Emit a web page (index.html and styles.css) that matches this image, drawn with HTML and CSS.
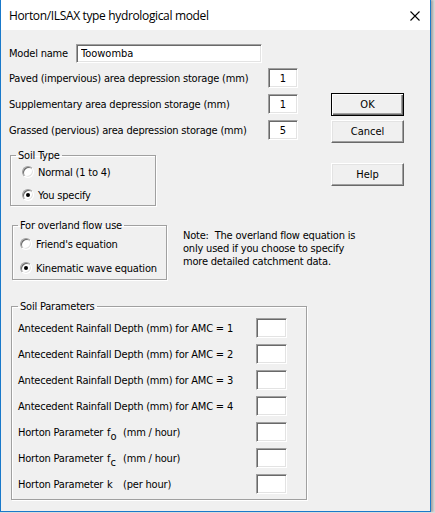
FILE: index.html
```html
<!DOCTYPE html>
<html lang="en">
<head>
    <meta charset="UTF-8">
    <title>Horton/ILSAX type hydrological model</title>
    <link rel="stylesheet" href="styles.css">
</head>
<body>
    <div class="window">
        <div class="titlebar">
            <span class="title">Horton/ILSAX type hydrological model</span>
            <svg class="close" width="10" height="10" viewBox="0 0 10 10">
                <path d="M0.5 0.5 L9.5 9.5 M9.5 0.5 L0.5 9.5" stroke="#000" stroke-width="1.1" fill="none"/>
            </svg>
        </div>

        <div class="client">
            <div class="upper">
                <div class="main-col">
                    <div class="row name-row">
                        <label class="name-label">Model name</label>
                        <input type="text" class="field name-field" value="Toowomba">
                    </div>
                    <div class="row depth-row">
                        <label class="depth-label">Paved (impervious) area depression storage (mm)</label>
                        <input type="text" class="field num-field" value="1">
                    </div>
                    <div class="row depth-row">
                        <label class="depth-label">Supplementary area depression storage (mm)</label>
                        <input type="text" class="field num-field" value="1">
                    </div>
                    <div class="row depth-row">
                        <label class="depth-label">Grassed (pervious) area depression storage (mm)</label>
                        <input type="text" class="field num-field" value="5">
                    </div>

                    <fieldset class="group soil-type">
                        <legend>Soil Type</legend>
                        <label class="radio-row first"><input type="radio" name="soil"> Normal (1 to 4)</label>
                        <label class="radio-row second"><input type="radio" name="soil" checked> You specify</label>
                    </fieldset>
                </div>

                <div class="buttons">
                    <button class="btn default">OK</button>
                    <button class="btn">Cancel</button>
                    <button class="btn help">Help</button>
                </div>
            </div>

            <div class="overland-row">
                <fieldset class="group overland">
                    <legend>For overland flow use</legend>
                    <label class="radio-row first"><input type="radio" name="flow"> Friend's equation</label>
                    <label class="radio-row second"><input type="radio" name="flow" checked> Kinematic wave equation</label>
                </fieldset>
                <p class="note">Note:&nbsp; The overland flow equation is<br>only used if you choose to specify<br>more detailed catchment data.</p>
            </div>

            <fieldset class="group soil-params">
                <legend>Soil Parameters</legend>
                <div class="param-row"><label class="param-label">Antecedent Rainfall Depth (mm) for AMC = 1</label><input type="text" class="field param-field"></div>
                <div class="param-row"><label class="param-label">Antecedent Rainfall Depth (mm) for AMC = 2</label><input type="text" class="field param-field"></div>
                <div class="param-row"><label class="param-label">Antecedent Rainfall Depth (mm) for AMC = 3</label><input type="text" class="field param-field"></div>
                <div class="param-row"><label class="param-label">Antecedent Rainfall Depth (mm) for AMC = 4</label><input type="text" class="field param-field"></div>
                <div class="param-row"><label class="param-label">Horton Parameter <span class="sym">f<span class="sub">o</span></span>(mm / hour)</label><input type="text" class="field param-field"></div>
                <div class="param-row"><label class="param-label">Horton Parameter <span class="sym">f<span class="sub">c</span></span>(mm / hour)</label><input type="text" class="field param-field"></div>
                <div class="param-row"><label class="param-label">Horton Parameter <span class="sym">k</span>(per hour)</label><input type="text" class="field param-field"></div>
            </fieldset>
        </div>
    </div>
</body>
</html>
```

FILE: styles.css
```css
/* dialog window */
body {
    margin: 0;
    background-color: #dadada;
    font-family: "DejaVu Sans Condensed", "DejaVu Sans", sans-serif;
    font-stretch: condensed;
    font-size: 11px;
    letter-spacing: -0.2px;
    color: #000;
}
.window {
    width: 429px;
    height: 511px;
    background-color: #f0f0f0;
    border: 1px solid #1979ca;
    border-top: none;
    box-shadow: 2px 0 2px rgba(0, 0, 0, 0.25);
}
.titlebar {
    height: 30px;
    background-color: #fff;
    display: flex;
    align-items: center;
    justify-content: space-between;
    padding: 0 10px 0 8px;
}
.title {
    font-family: "Open Sans", "Liberation Sans", sans-serif;
    font-stretch: normal;
    font-size: 12px;
    letter-spacing: -0.35px;
}
.close {
    display: block;
    margin-top: 1px;
}

/* client area */
.client {
    padding: 14px 0 0 8px;
}
.upper {
    display: flex;
}
.main-col {
    width: 290px;
}
.row {
    display: flex;
    align-items: center;
}
.name-row {
    height: 19px;
}
.name-label {
    width: 67px;
}
.depth-row {
    height: 20px;
    margin-top: 6px;
}
.name-row + .depth-row {
    margin-top: 5px;
}
.depth-label {
    width: 259px;
}

/* sunken edit boxes */
.field {
    box-sizing: border-box;
    margin: 0;
    font: inherit;
    letter-spacing: 0;
    background-color: #fff;
    border: 1px solid;
    border-color: #a0a0a0 #fff #fff #a0a0a0;
    box-shadow: inset 1px 1px #696969, inset -1px -1px #e3e3e3;
    outline: none;
}
.name-field {
    width: 186px;
    height: 19px;
    padding: 0 0 0 4px;
}
.num-field {
    width: 30px;
    height: 20px;
    padding: 0;
    text-align: center;
}
.param-field {
    width: 31px;
    height: 20px;
    padding: 0;
}

/* buttons */
.buttons {
    display: flex;
    flex-direction: column;
    margin-left: 32px;
    padding-top: 49px;
}
.btn {
    box-sizing: border-box;
    width: 73px;
    height: 23px;
    margin: 0 0 4px;
    padding: 0;
    font: inherit;
    background-color: #f0f0f0;
    border: 1px solid;
    border-color: #fff #696969 #696969 #fff;
    box-shadow: inset -1px -1px #a0a0a0, inset 1px 1px #e3e3e3;
}
.btn.default {
    border-color: #000;
    box-shadow: inset 1px 1px #fff, inset -1px -1px #696969, inset -2px -2px #a0a0a0;
}
.btn.help {
    margin-top: 16px;
}

/* group boxes */
.group {
    margin: 0;
    border: 1px solid #a0a0a0;
    box-shadow: inset 1px 1px #fff, 1px 1px #fff;
    padding: 0 0 2px 5px;
}
.group legend {
    padding: 0 2px;
    line-height: 13px;
}
.soil-type {
    width: 146px;
    box-sizing: border-box;
    margin: 9px 0 0 1px;
}
.radio-row {
    display: flex;
    align-items: center;
    gap: 4px;
    height: 16px;
    padding-left: 6px;
}
.soil-type .first {
    margin-top: 2px;
}
.soil-type .second {
    margin-top: 7px;
}
.radio-row input {
    appearance: none;
    -webkit-appearance: none;
    box-sizing: border-box;
    width: 12px;
    height: 12px;
    margin: 0;
    border-radius: 50%;
    background-color: #fff;
    border: 1px solid;
    border-color: #a0a0a0 #fff #fff #a0a0a0;
    box-shadow: inset 1px 1px #696969, inset -1px -1px #e3e3e3;
    display: flex;
    align-items: center;
    justify-content: center;
}
.radio-row input:checked::after {
    content: "";
    width: 4px;
    height: 4px;
    border-radius: 50%;
    background-color: #000;
}

.overland-row {
    display: flex;
    align-items: flex-start;
    margin-top: 13px;
}
.overland {
    width: 155px;
    box-sizing: border-box;
    margin-left: 3px;
    padding-bottom: 3px;
}
.overland .radio-row {
    padding-left: 2px;
}
.overland .first {
    margin-top: 4px;
}
.overland .second {
    margin-top: 8px;
}
.note {
    margin: 10px 0 0 16px;
    line-height: 13px;
    white-space: nowrap;
}

/* soil parameters */
.soil-params {
    width: 296px;
    box-sizing: border-box;
    margin: 20px 0 0 2px;
    padding: 5px 0 5px 6px;
    display: flex;
    flex-direction: column;
    gap: 6px;
}
.param-row {
    display: flex;
    align-items: center;
    height: 20px;
}
.param-label {
    width: 238px;
    white-space: nowrap;
}
.sym {
    display: inline-block;
    width: 16px;
    margin-left: 1px;
}
.sub {
    position: relative;
    top: 4px;
}
```
